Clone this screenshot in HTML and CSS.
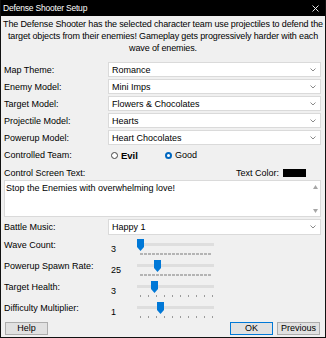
FILE: index.html
```html
<!DOCTYPE html>
<html>
<head>
<meta charset="utf-8">
<link rel="stylesheet" href="styles.css">
</head>
<body>
<div class="window">
  <div class="titlebar">
    <span class="title">Defense Shooter Setup</span>
    <svg class="close" width="7" height="7" viewBox="0 0 7 7"><path d="M0.5 0.5 L6.5 6.5 M6.5 0.5 L0.5 6.5" stroke="#e8e8e8" stroke-width="1" fill="none"/></svg>
  </div>
  <p class="desc">The Defense Shooter has the selected character team use projectiles to defend the<br>target objects from their enemies! Gameplay gets progressively harder with each<br>wave of enemies.</p>
  <div class="form">
    <div class="row">
      <span class="label">Map Theme:</span>
      <div class="combo"><span>Romance</span><svg class="chev" width="6" height="4" viewBox="0 0 6 4"><path d="M0.5 0.5 L3 3 L5.5 0.5" stroke="#8a8a8a" fill="none"/></svg></div>
    </div>
    <div class="row">
      <span class="label">Enemy Model:</span>
      <div class="combo"><span>Mini Imps</span><svg class="chev" width="6" height="4" viewBox="0 0 6 4"><path d="M0.5 0.5 L3 3 L5.5 0.5" stroke="#8a8a8a" fill="none"/></svg></div>
    </div>
    <div class="row">
      <span class="label">Target Model:</span>
      <div class="combo"><span>Flowers &amp; Chocolates</span><svg class="chev" width="6" height="4" viewBox="0 0 6 4"><path d="M0.5 0.5 L3 3 L5.5 0.5" stroke="#8a8a8a" fill="none"/></svg></div>
    </div>
    <div class="row">
      <span class="label">Projectile Model:</span>
      <div class="combo"><span>Hearts</span><svg class="chev" width="6" height="4" viewBox="0 0 6 4"><path d="M0.5 0.5 L3 3 L5.5 0.5" stroke="#8a8a8a" fill="none"/></svg></div>
    </div>
    <div class="row">
      <span class="label">Powerup Model:</span>
      <div class="combo"><span>Heart Chocolates</span><svg class="chev" width="6" height="4" viewBox="0 0 6 4"><path d="M0.5 0.5 L3 3 L5.5 0.5" stroke="#8a8a8a" fill="none"/></svg></div>
    </div>
    <div class="row radio-row">
      <span class="label">Controlled Team:</span>
      <div class="radios">
        <span class="radio"><span class="dot"></span><b>Evil</b></span>
        <span class="radio"><span class="dot on"></span>Good</span>
      </div>
    </div>
    <div class="text-head">
      <span class="label">Control Screen Text:</span>
      <span class="color-pick">Text Color:<span class="swatch"></span></span>
    </div>
    <div class="textarea">
      <span class="ta-text">Stop the Enemies with overwhelming love!</span>
      <div class="ta-scroll">
        <svg width="5" height="4" viewBox="0 0 5 4"><path d="M0 4 L2.5 0 L5 4 Z" fill="#a6a6a6"/></svg>
        <svg width="5" height="4" viewBox="0 0 5 4"><path d="M0 0 L2.5 4 L5 0 Z" fill="#a6a6a6"/></svg>
      </div>
    </div>
    <div class="row music">
      <span class="label">Battle Music:</span>
      <div class="combo"><span>Happy 1</span><svg class="chev" width="6" height="4" viewBox="0 0 6 4"><path d="M0.5 0.5 L3 3 L5.5 0.5" stroke="#8a8a8a" fill="none"/></svg></div>
    </div>
    <div class="srow">
      <span class="label">Wave Count:</span>
      <span class="val">3</span>
      <div class="slider"><div class="track"></div><svg class="thumb" style="left:0px" width="7" height="12" viewBox="0 0 7 12"><path d="M0 0 H7 V8 L3.5 12 L0 8 Z" fill="#0078d7"/></svg><div class="ticks dense"></div></div>
    </div>
    <div class="srow">
      <span class="label">Powerup Spawn Rate:</span>
      <span class="val">25</span>
      <div class="slider"><div class="track"></div><svg class="thumb" style="left:17px" width="7" height="12" viewBox="0 0 7 12"><path d="M0 0 H7 V8 L3.5 12 L0 8 Z" fill="#0078d7"/></svg><div class="ticks dense"></div></div>
    </div>
    <div class="srow">
      <span class="label">Target Health:</span>
      <span class="val">3</span>
      <div class="slider"><div class="track"></div><svg class="thumb" style="left:14px" width="7" height="12" viewBox="0 0 7 12"><path d="M0 0 H7 V8 L3.5 12 L0 8 Z" fill="#0078d7"/></svg><div class="ticks sparse"></div></div>
    </div>
    <div class="srow">
      <span class="label">Difficulty Multiplier:</span>
      <span class="val">1</span>
      <div class="slider"><div class="track"></div><svg class="thumb" style="left:20px" width="7" height="12" viewBox="0 0 7 12"><path d="M0 0 H7 V8 L3.5 12 L0 8 Z" fill="#0078d7"/></svg><div class="ticks sparse"></div></div>
    </div>
    <div class="buttons">
      <button class="btn">Help</button>
      <span class="spacer"></span>
      <button class="btn default">OK</button>
      <button class="btn">Previous</button>
    </div>
  </div>
</div>
</body>
</html>
```
FILE: styles.css
```css
html, body {
  margin: 0;
  padding: 0;
  background: #f0f0f0;
}
body {
  font-family: "Liberation Sans", Arial, sans-serif;
  font-size: 9px;
  color: #000;
  width: 326px;
  height: 338px;
  overflow: hidden;
}
.window {
  width: 326px;
  height: 338px;
  box-sizing: border-box;
  border: 1px solid #111;
  border-top: none;
  background: #f0f0f0;
  display: flex;
  flex-direction: column;
}
.titlebar {
  height: 16px;
  background: #000;
  color: #fff;
  display: flex;
  align-items: center;
  justify-content: space-between;
  padding: 0 6px 0 2px;
  flex: none;
}
.title {
  font-size: 8.5px;
  letter-spacing: -0.2px;
}
.close {
  display: block;
}
.desc {
  margin: 2px 0 0;
  font-size: 9px;
  line-height: 12px;
  text-align: center;
  letter-spacing: -0.14px;
  white-space: nowrap;
}
.form {
  padding: 8px 4px 0 3px;
  display: flex;
  flex-direction: column;
}
.row {
  display: grid;
  grid-template-columns: 104px 1fr;
  align-items: center;
  height: 15px;
  margin-bottom: 2px;
}
.label {
  white-space: nowrap;
  line-height: 12px;
}
.combo {
  height: 15px;
  box-sizing: border-box;
  background: #fff;
  border: 1px solid #dadada;
  display: flex;
  align-items: center;
  justify-content: space-between;
  padding: 0 4px 0 3px;
}
.chev {
  display: block;
}
.radio-row {
  height: 16px;
  margin-bottom: 3px;
}
.radios {
  display: flex;
  align-items: center;
  padding-left: 3px;
  gap: 27px;
}
.radio {
  display: flex;
  align-items: center;
  gap: 3px;
}
.radio b {
  font-weight: bold;
  font-size: 9.5px;
}
.dot {
  width: 7px;
  height: 7px;
  box-sizing: border-box;
  border-radius: 50%;
  border: 1px solid #444;
  background: #fff;
}
.dot.on {
  border: 2px solid #0067c0;
  background: #fff;
}
.text-head {
  display: flex;
  justify-content: space-between;
  align-items: center;
  height: 13px;
}
.color-pick {
  display: flex;
  align-items: center;
  gap: 4px;
  padding-right: 15px;
}
.swatch {
  width: 23px;
  height: 8px;
  background: #000;
  display: inline-block;
}
.textarea {
  height: 37px;
  box-sizing: border-box;
  background: #fff;
  border: 1px solid #dadada;
  display: flex;
  justify-content: space-between;
  padding: 1px 2px 3px 1px;
  margin-top: 1px;
  margin-bottom: 2px;
}
.ta-text {
  line-height: 12px;
}
.ta-scroll {
  display: flex;
  flex-direction: column;
  justify-content: space-between;
  padding-top: 3px;
}
.ta-scroll svg {
  display: block;
}
.music {
  height: 16px;
}
.music .combo {
  height: 16px;
}
.srow {
  display: grid;
  grid-template-columns: 104px 29px 80px;
  height: 21px;
  position: relative;
}
.srow .label {
  padding-top: 2px;
}
.val {
  padding-top: 6px;
  line-height: 12px;
  padding-left: 3px;
}
.slider {
  position: relative;
  height: 21px;
}
.track {
  position: absolute;
  left: 0;
  top: 6px;
  width: 77px;
  height: 3px;
  background: #dedede;
}
.thumb {
  position: absolute;
  top: 2px;
  display: block;
}
.ticks {
  position: absolute;
  left: 3px;
  top: 16px;
  height: 2px;
}
.ticks.dense {
  width: 72px;
  background: repeating-linear-gradient(to right, #b4b4b4 0 3px, transparent 3px 4px);
}
.ticks.sparse {
  width: 73px;
  background: repeating-linear-gradient(to right, #9a9a9a 0 1px, transparent 1px 8px);
}
.buttons {
  display: flex;
  align-items: center;
  margin-top: 1px;
  gap: 4px;
  padding-left: 1px;
  padding-right: 1px;
}
.spacer {
  flex: 1;
}
.btn {
  font-family: "Liberation Sans", Arial, sans-serif;
  font-size: 9px;
  width: 43px;
  height: 13px;
  padding: 0;
  margin: 0;
  line-height: 11px;
  background: #e1e1e1;
  border: 1px solid #adadad;
  color: #000;
}
.btn.default {
  border-color: #0078d7;
}
```
